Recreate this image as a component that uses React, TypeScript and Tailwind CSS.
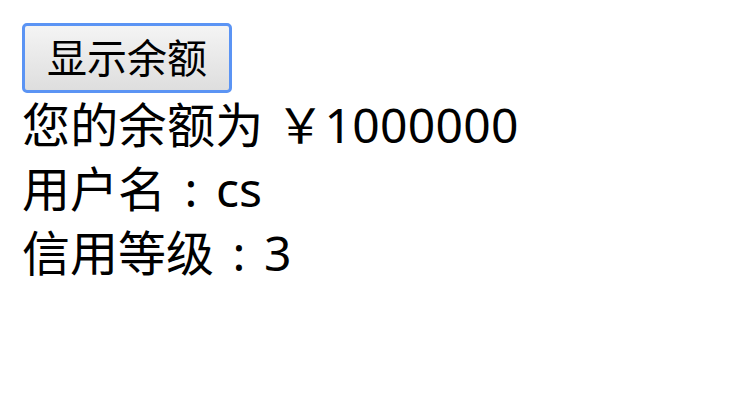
export default function App() {
  return (
    <main className="min-h-[405px] bg-white px-[22px] pt-[23px] text-black">
      <button className="flex h-[70px] w-[210px] items-center justify-center rounded-[5px] border-[3px] border-[#5b94f4] bg-gradient-to-b from-[#f4f4f4] to-[#dedede] font-['Noto_Sans','Noto_Sans_CJK_SC',sans-serif] text-[40px] leading-none text-black">
        显示余额
      </button>

      <div className="font-['Noto_Sans','Noto_Sans_CJK_SC',sans-serif] text-[48px] leading-[64px]">
        <div className="tracking-[0.3px]">您的余额为 ￥1000000</div>
        <div>
          用户名<span className="inline-block w-[50px] text-center">:</span>cs
        </div>
        <div>
          信用等级<span className="inline-block w-[50px] text-center">:</span>3
        </div>
      </div>
    </main>
  );
}
